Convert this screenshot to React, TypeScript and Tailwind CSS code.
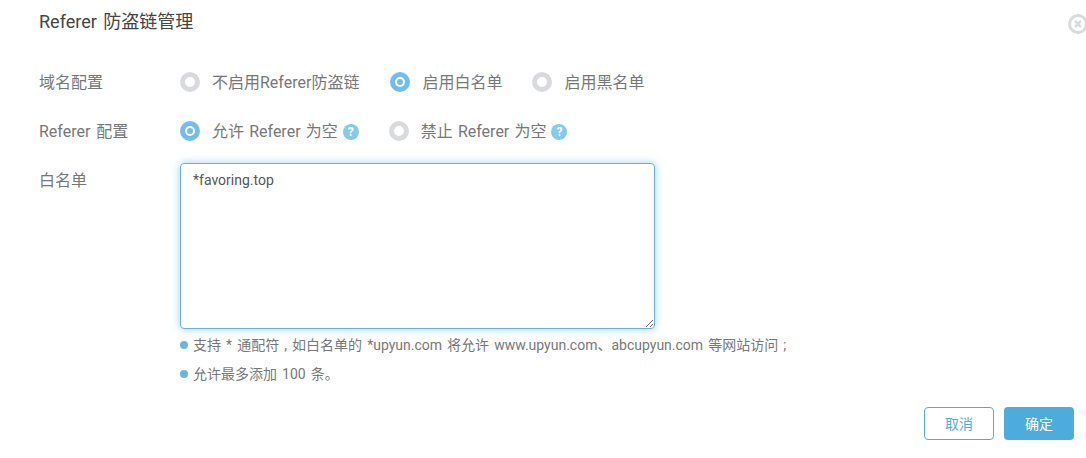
import React from 'react';

const FONT = "font-['Roboto','Noto_Sans_CJK_SC',sans-serif] [word-spacing:2px]";

const Radio = ({ checked, label, help, className = '' }: { checked?: boolean; label: string; help?: boolean; className?: string }) => (
  <div className={`flex items-center [word-spacing:1.2px] ${className}`}>
    <span
      className={`flex h-5 w-5 shrink-0 items-center justify-center rounded-full border-[5px] ${
        checked ? 'border-[#73bdee]' : 'border-[#d8dadd]'
      }`}
    >
      {checked && <span className="h-1.5 w-1.5 shrink-0 rounded-full bg-[#73bdee]" />}
    </span>
    <span className="ml-3 mt-0.5 text-base leading-5 text-[#777]">{label}</span>
    {help && (
      <span className="ml-[5px] mt-0.5 flex h-4 w-4 items-center justify-center rounded-full bg-[#85cbe8] text-xs font-bold leading-none text-white">
        ?
      </span>
    )}
  </div>
);

const Note = ({ children }: { children: React.ReactNode }) => (
  <div className="flex h-[29px] items-center text-sm text-[#777] [word-spacing:1.6px]">
    <span className="mr-[5px] h-2 w-2 rounded-full bg-[#6cb6dd]" />
    {children}
  </div>
);

export default function App() {
  return (
    <div className={`relative h-[458px] w-[1086px] overflow-hidden bg-white pl-[39px] pr-3 ${FONT}`}>
      {/* Close */}
      <svg className="absolute left-[1068px] top-[14px]" width="20" height="20" viewBox="0 0 20 20" fill="none">
        <circle cx="10" cy="10" r="8.5" stroke="#d8dadd" strokeWidth="3" />
        <path d="M7 7l6 6M13 7l-6 6" stroke="#d8dadd" strokeWidth="2.5" />
      </svg>

      <h1 className="flex h-[44px] items-center text-lg font-normal text-[#444]">Referer 防盗链管理</h1>

      <div className="mt-[28px] flex h-5 items-center">
        <div className="mt-0.5 w-[141px] text-base text-[#777]">域名配置</div>
        <div className="flex gap-[30px]">
          <Radio label="不启用Referer防盗链" className="pr-px" />
          <Radio checked label="启用白名单" />
          <Radio label="启用黑名单" />
        </div>
      </div>

      <div className="mt-[29px] flex h-5 items-center">
        <div className="mt-0.5 w-[141px] text-base text-[#777]">Referer 配置</div>
        <div className="flex gap-[30px]">
          <Radio checked label="允许 Referer 为空" help />
          <Radio label="禁止 Referer 为空" help />
        </div>
      </div>

      <div className="mt-[22px] flex">
        <div className="w-[141px] pt-2 text-base leading-5 text-[#777]">白名单</div>
        <div>
          <textarea
            readOnly
            value="*favoring.top"
            className="block h-[166px] w-[475px] rounded border border-[#66afe9] px-3 py-1.5 text-sm leading-5 text-[#555] shadow-[0_0_8px_rgba(102,175,233,0.6)] outline-none"
          />
          <div className="mt-[1px]">
            <Note>支持 * 通配符 , 如白名单的 *upyun.com 将允许 www.upyun.com、abcupyun.com 等网站访问 ;</Note>
            <Note>允许最多添加 100 条。</Note>
          </div>
        </div>
      </div>

      <div className="mt-[19px] flex justify-end gap-2.5">
        <button className="h-[33px] w-[70px] rounded-sm border border-[#4dacdb] bg-white text-sm text-[#4dacdb]">取消</button>
        <button className="h-[33px] w-[70px] rounded-sm bg-[#4dacdb] text-sm text-white">确定</button>
      </div>
    </div>
  );
}
